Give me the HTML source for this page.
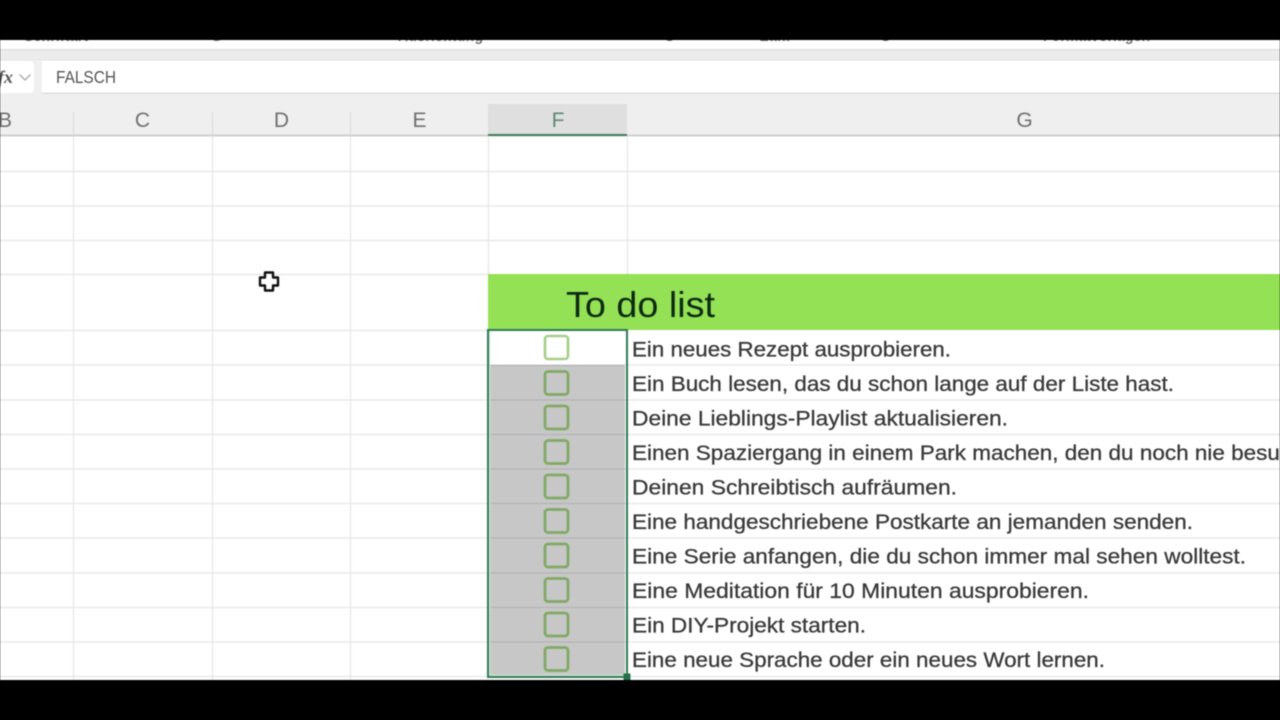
<!DOCTYPE html>
<html lang="de"><head><meta charset="utf-8"><title>To do list</title>
<style>
html,body{margin:0;padding:0;width:1280px;height:720px;overflow:hidden;background:#000}
svg{display:block;filter:blur(.5px)}
text{font-family:"Liberation Sans",sans-serif}
.t{font-size:21px;fill:#3a3a3c;stroke:#3a3a3c;stroke-width:.3px}
.h{font-size:21px;fill:#707070;text-anchor:middle}
.r{font-size:14px;fill:#6a6a6a;font-weight:bold}
.g{stroke:#e9e9e9;stroke-width:1.4;fill:none}
.cw{fill:none;stroke:#a5cf87;stroke-width:2.6}
.cg{fill:none;stroke:#82a966;stroke-width:2.8}
.sep{stroke:#b4b4b4;stroke-width:1.2}
</style></head><body>
<svg width="1280" height="720" viewBox="0 0 1280 720" xmlns="http://www.w3.org/2000/svg">
<rect width="1280" height="720" fill="#fff"/>
<text class="r" x="24" y="41" textLength="64">Schriftart</text>
<text class="r" x="212" y="41">S</text>
<text class="r" x="398" y="41" textLength="85">Ausrichtung</text>
<text class="r" x="665" y="41">S</text>
<text class="r" x="760" y="41" textLength="30">Zahl</text>
<text class="r" x="881" y="41">S</text>
<text class="r" x="1043" y="41" textLength="107">Formatvorlagen</text>
<rect width="1280" height="40" fill="#000"/>
<rect y="49" width="1280" height="11" fill="#ececec"/>
<rect y="49" width="1280" height="1.500" fill="#dedede"/>
<rect y="59.500" width="1280" height="1" fill="#e0e0e0"/>
<rect y="60" width="42" height="44" fill="#f0f0f0"/>
<rect x="-8" y="61" width="42" height="32" rx="4" fill="#fff"/>
<text x="-2" y="83" style="font-family:'Liberation Serif',serif;font-size:18px;font-style:italic;font-weight:bold;fill:#555">fx</text>
<path d="M19.500 74.500l5.500 5.500 5.500-5.500" fill="none" stroke="#a8a8a8" stroke-width="1.300"/>
<rect x="42" y="61" width="1238" height="32" fill="#fff"/>
<text x="56" y="83" textLength="60" lengthAdjust="spacingAndGlyphs" style="font-size:17.500px;fill:#555">FALSCH</text>
<rect y="93" width="1280" height="43" fill="#efefef"/>
<rect y="92.500" x="42" width="1238" height="1.500" fill="#dedede"/>
<path d="M73.500 112V135M212.500 112V135M350.500 112V135" stroke="#dcdcdc" stroke-width="1.200"/>
<rect x="488" y="104" width="139" height="31" fill="#dfdfdf"/>
<rect y="134.500" width="1280" height="2" fill="#cfcfcf"/>
<rect x="488" y="134" width="139" height="2" fill="#3f7f5d"/>
<text class="h" x="5" y="127">B</text>
<text class="h" x="142.500" y="127">C</text>
<text class="h" x="281.500" y="127">D</text>
<text class="h" x="419.500" y="127">E</text>
<text class="h" x="558" y="127" style="fill:#5d8a75">F</text>
<text class="h" x="1024.500" y="127">G</text>

<path class="g" d="M0 171.500H1280M0 206H1280M0 240.500H1280M0 274.500H488M0 330.500H488M0 365H1280M0 400H1280M0 434.500H1280M0 469H1280M0 503.500H1280M0 538H1280M0 573H1280M0 607.500H1280M0 642H1280M0 676.500H1280"/>
<path class="g" d="M73.500 136V680M212.500 136V680M350.500 136V680M488.500 136V274M627.500 136V274"/>

<rect x="488" y="274" width="792" height="56" fill="#95e155"/>
<text x="566" y="317" textLength="149" lengthAdjust="spacingAndGlyphs" style="font-size:36px;fill:#0c2a12">To do list</text>

<rect x="490" y="365" width="135" height="311" fill="#c7c7c7"/>
<path class="sep" d="M490 365.500H625M490 400H625M490 434.500H625M490 469H625M490 503.500H625M490 538H625M490 573H625M490 607.500H625M490 642H625"/>
<path d="M489.500 331V675.500H625" fill="none" stroke="#cfe8d8" stroke-width="1.500"/>
<rect x="488" y="330" width="139" height="347" fill="none" stroke="#2f7a56" stroke-width="2"/>
<rect x="623.500" y="673.500" width="7" height="7" fill="#217346"/>

<rect class="cw" x="545" y="336" width="23" height="23" rx="3"/>
<rect class="cg" x="545" y="371.500" width="23" height="23" rx="3"/>
<rect class="cg" x="545" y="406" width="23" height="23" rx="3"/>
<rect class="cg" x="545" y="440.500" width="23" height="23" rx="3"/>
<rect class="cg" x="545" y="475" width="23" height="23" rx="3"/>
<rect class="cg" x="545" y="509.500" width="23" height="23" rx="3"/>
<rect class="cg" x="545" y="544" width="23" height="23" rx="3"/>
<rect class="cg" x="545" y="578.500" width="23" height="23" rx="3"/>
<rect class="cg" x="545" y="613" width="23" height="23" rx="3"/>
<rect class="cg" x="545" y="647.500" width="23" height="23" rx="3"/>

<text class="t" x="632" y="356.500" textLength="319" lengthAdjust="spacingAndGlyphs">Ein neues Rezept ausprobieren.</text>
<text class="t" x="632" y="391" textLength="542" lengthAdjust="spacingAndGlyphs">Ein Buch lesen, das du schon lange auf der Liste hast.</text>
<text class="t" x="632" y="425.500" textLength="376" lengthAdjust="spacingAndGlyphs">Deine Lieblings-Playlist aktualisieren.</text>
<text class="t" x="632" y="460" textLength="733" lengthAdjust="spacingAndGlyphs">Einen Spaziergang in einem Park machen, den du noch nie besucht hast.</text>
<text class="t" x="632" y="494.500" textLength="325" lengthAdjust="spacingAndGlyphs">Deinen Schreibtisch aufräumen.</text>
<text class="t" x="632" y="529" textLength="561" lengthAdjust="spacingAndGlyphs">Eine handgeschriebene Postkarte an jemanden senden.</text>
<text class="t" x="632" y="563.500" textLength="614" lengthAdjust="spacingAndGlyphs">Eine Serie anfangen, die du schon immer mal sehen wolltest.</text>
<text class="t" x="632" y="598" textLength="457" lengthAdjust="spacingAndGlyphs">Eine Meditation für 10 Minuten ausprobieren.</text>
<text class="t" x="632" y="632.500" textLength="234" lengthAdjust="spacingAndGlyphs">Ein DIY-Projekt starten.</text>
<text class="t" x="632" y="667" textLength="473" lengthAdjust="spacingAndGlyphs">Eine neue Sprache oder ein neues Wort lernen.</text>

<path d="M265 272.500h8v5h5v8h-5v5h-8v-5h-5v-8h5z" fill="#fff" stroke="#111" stroke-width="2.400" stroke-linejoin="round"/>
<rect y="680" width="1280" height="40" fill="#000"/>
</svg>
</body></html>
